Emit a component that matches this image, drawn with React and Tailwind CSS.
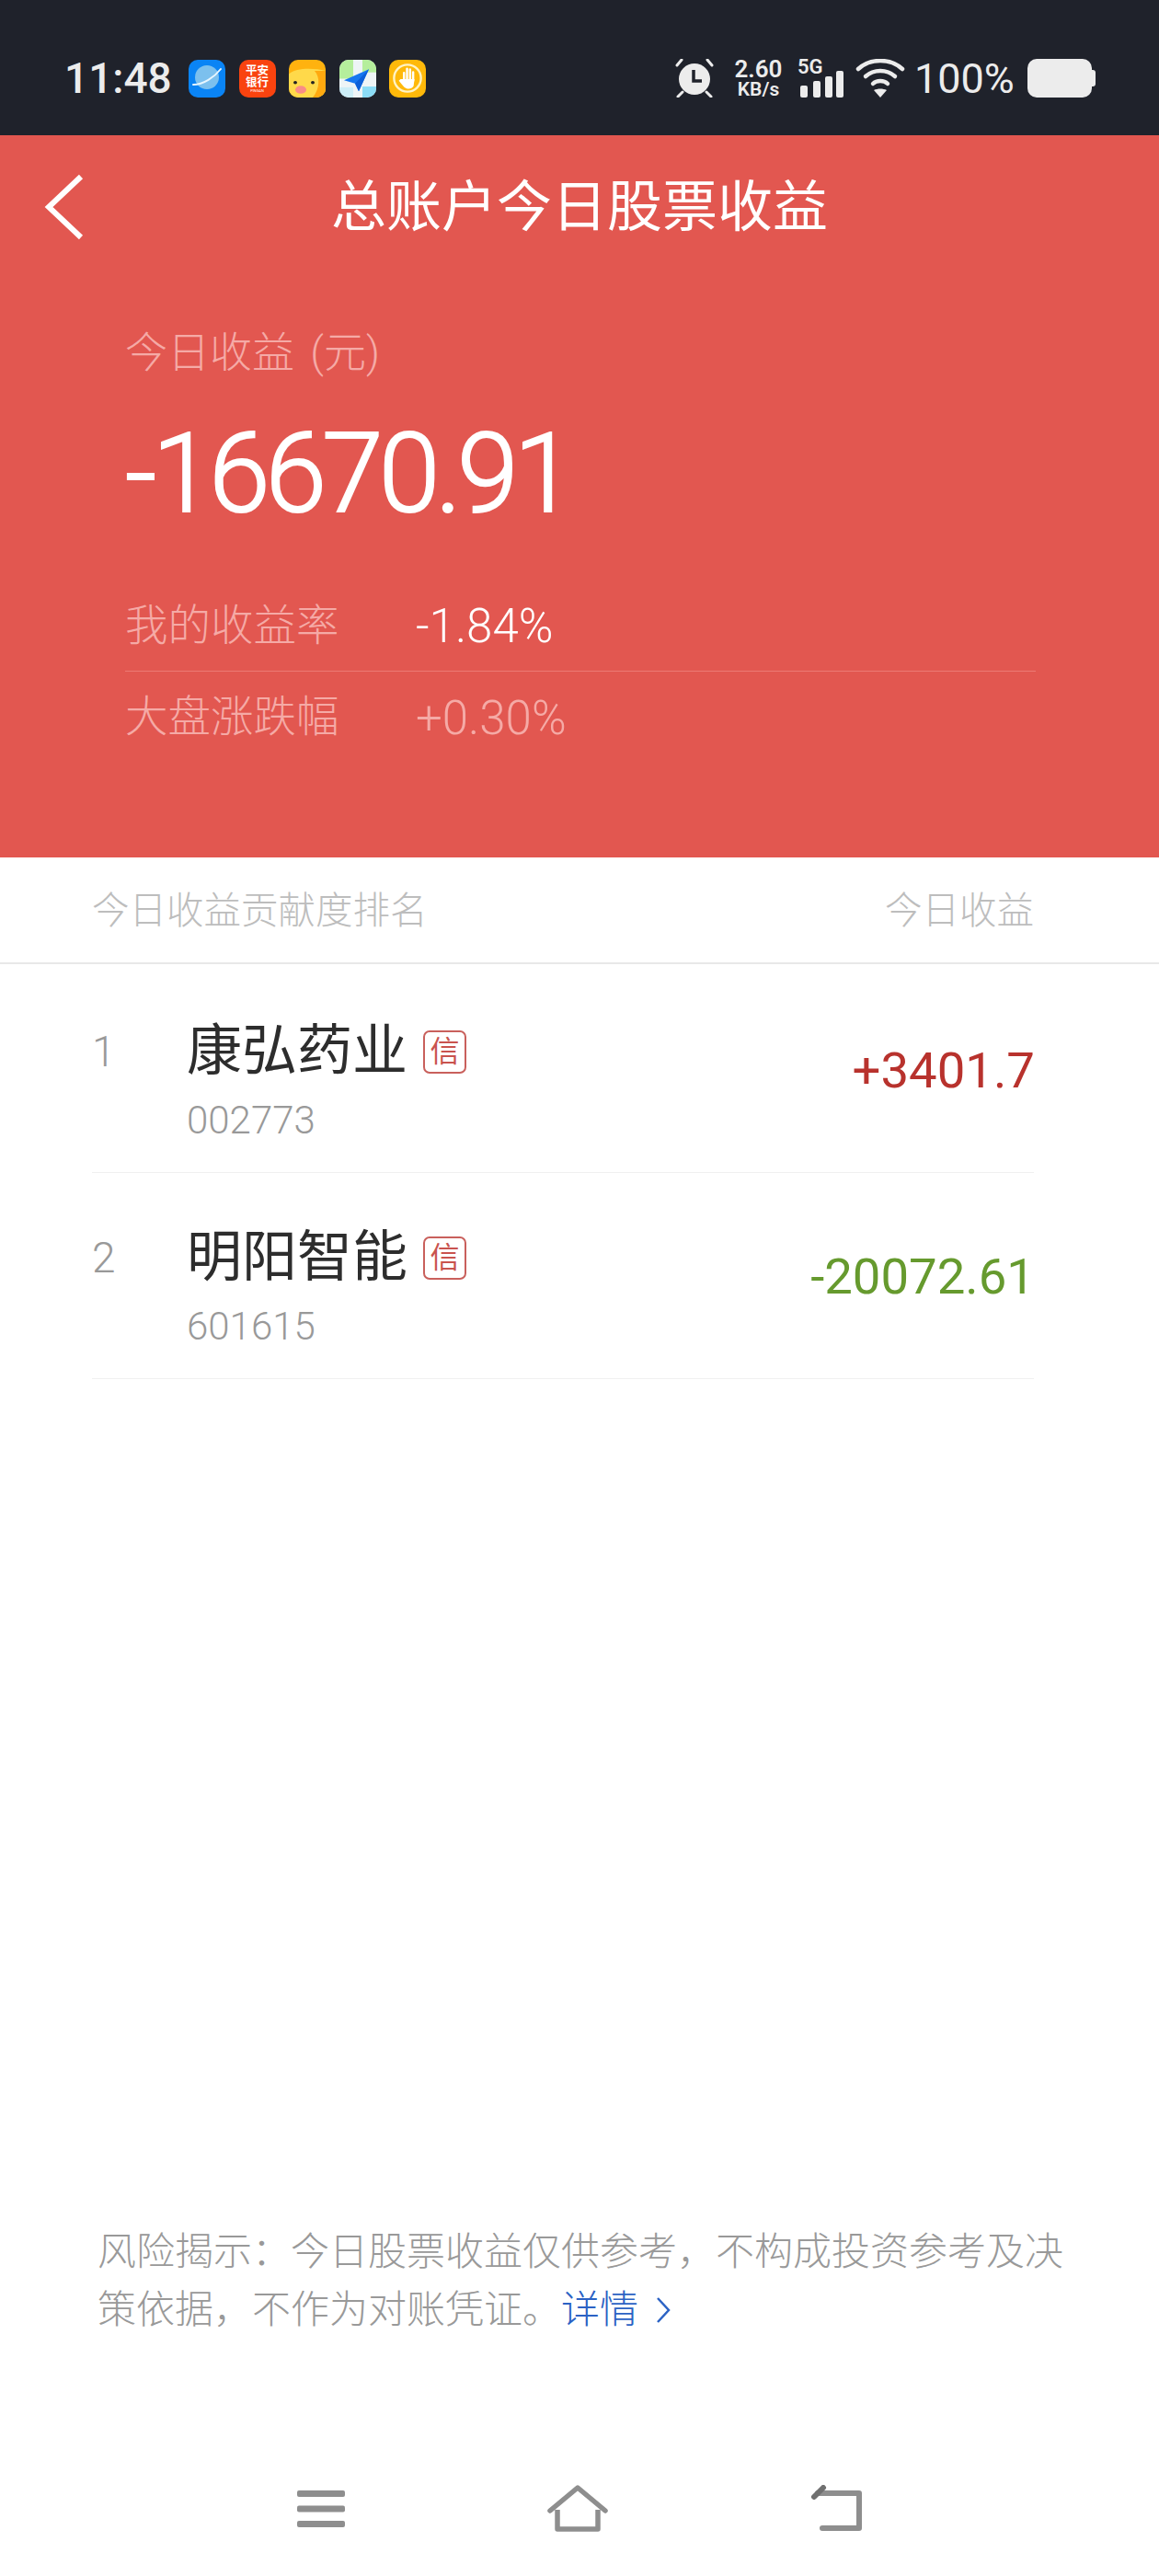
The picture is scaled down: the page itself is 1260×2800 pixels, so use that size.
import React from 'react';

const cjk = "font-['Roboto','Noto_Sans_CJK_SC',sans-serif]";

const stocks = [
  { rank: '1', name: '康弘药业', code: '002773', value: '+3401.7', color: 'text-[#b8322d]' },
  { rank: '2', name: '明阳智能', code: '601615', value: '-20072.61', color: 'text-[#669a2e]' },
];

const AppIcon = ({ className, children }) => (
  <div className={`w-[40px] h-[41px] rounded-[10px] overflow-hidden flex flex-col items-center justify-center ${className}`}>
    {children}
  </div>
);

const StatusBar = () => (
  <div className="h-[147px] bg-[#1f222b] flex items-center justify-between pl-[70px] pr-[69px] pt-[23px] text-[#ececec]">
    <div className="flex items-center">
      <span className="text-[46px] leading-none font-medium font-['Roboto',sans-serif] w-[135px]">11:48</span>
      <div className="flex gap-[14.5px]">
        <AppIcon className="bg-[#0a84f5]">
          <svg width="36" height="36" viewBox="0 0 36 36">
            <circle cx="18" cy="17" r="13" fill="#7cc0ee" />
            <path d="M3 25 C14 25 26 17 33 8" fill="none" stroke="#e8f6ff" strokeWidth="2" strokeLinecap="round" />
          </svg>
        </AppIcon>
        <AppIcon className="bg-[#f9430f] text-white font-bold leading-[13px] text-[12.5px]">
          <span>平安</span>
          <span>银行</span>
          <span className="text-[4px] leading-[5px] font-normal">PINGAN</span>
        </AppIcon>
        <AppIcon className="bg-[#ffb20f]">
          <svg width="40" height="41" viewBox="0 0 40 48" preserveAspectRatio="none">
            <path d="M0 18 C8 10 26 10 40 14 L40 48 L0 48 Z" fill="#ffd94a" />
            <path d="M28 14 C34 22 34 36 26 48 L40 48 L40 14 Z" fill="#ffa90f" />
            <circle cx="7" cy="29" r="2" fill="#222" />
            <circle cx="26" cy="29" r="2" fill="#222" />
            <ellipse cx="13" cy="38" rx="6" ry="5" fill="#f98d86" />
          </svg>
        </AppIcon>
        <AppIcon className="bg-[#eef4f6]">
          <svg width="40" height="41" viewBox="0 0 40 48" preserveAspectRatio="none">
            <rect x="0" y="0" width="15" height="24" fill="#b5ee9c" />
            <rect x="25" y="0" width="15" height="16" fill="#b5ee9c" />
            <rect x="0" y="35" width="15" height="13" fill="#cdeef8" />
            <rect x="25" y="34" width="15" height="14" fill="#8bdcf6" />
            <path d="M32 12 L5 26 L17 30 L21 40 Z" fill="#1677f0" />
            <path d="M32 12 L17 30 L21 40 Z" fill="#0c5fd8" />
          </svg>
        </AppIcon>
        <AppIcon className="bg-[#ffb90a]">
          <svg width="34" height="34" viewBox="0 0 36 36">
            <circle cx="18" cy="18" r="15.500" fill="none" stroke="#fff3c4" strokeWidth="2.500" />
            <path d="M14 21 V12 M17.500 20 V7 M21 20 V8 M24.500 21 V11" fill="none" stroke="#fff" strokeWidth="2.600" strokeLinecap="round" />
            <path d="M13 19 H26 L25 27 C23 31 17 31 14 28 L8 21 L10 19 Z" fill="#fff" />
          </svg>
        </AppIcon>
      </div>
    </div>
    <div className="flex items-center">
      <svg width="44" height="42" viewBox="0 0 44 42" fill="none" className="mr-[19px]">
        <circle cx="22" cy="22" r="17" fill="#ececec" />
        <path d="M21 12 V24 H30" stroke="#1f222b" strokeWidth="3.500" />
        <path d="M3 7 L8 1 M41 7 L36 1 M4 41 L9 36 M40 41 L35 36" stroke="#ececec" strokeWidth="3" strokeLinecap="round" />
      </svg>
      <div className="w-[57px] mr-[14px] flex flex-col items-center font-['Roboto',sans-serif] font-semibold">
        <span className="text-[26px] leading-[24px]">2.60</span>
        <span className="text-[21px] leading-[20px]">KB/s</span>
      </div>
      <div className="w-[50px] mr-[13px] h-[42px] relative">
        <span className="absolute left-0 top-[-3px] text-[22px] leading-[24px] font-semibold font-['Roboto',sans-serif]">5G</span>
        <svg width="50" height="42" viewBox="0 0 50 42" className="absolute left-0 top-0">
          <rect x="3" y="29" width="8" height="13" rx="2" fill="#ececec" />
          <rect x="17" y="24" width="8" height="18" rx="2" fill="#ececec" />
          <rect x="30" y="19" width="8" height="23" rx="2" fill="#ececec" />
          <rect x="42" y="13" width="8" height="29" rx="2" fill="#ececec" />
        </svg>
      </div>
      <svg width="54" height="42" viewBox="0 0 54 42" fill="none" className="mr-[10px]">
        <path d="M3 11 C16 -1 38 -1 51 11" stroke="#ececec" strokeWidth="4.500" strokeLinecap="round" />
        <path d="M11 19 C20 11 34 11 43 19" stroke="#ececec" strokeWidth="4.500" strokeLinecap="round" />
        <path d="M19 27 C23 23 31 23 35 27" stroke="#ececec" strokeWidth="4.500" strokeLinecap="round" />
        <path d="M20 34 C24 32 30 32 34 34 L27 42 Z" fill="#ececec" />
      </svg>
      <span className="w-[123px] text-[45px] leading-none font-['Roboto',sans-serif]">100%</span>
      <div className="flex items-center">
        <div className="w-[70px] h-[42px] rounded-[10px] bg-[#ececec]"></div>
        <div className="w-[4px] h-[18px] rounded-r-[3px] bg-[#ececec]"></div>
      </div>
    </div>
  </div>
);

const Summary = () => (
  <div className="h-[785px] bg-[#e25750] flex flex-col">
    <div className="h-[158px] relative flex items-center justify-center">
      <svg width="44" height="72" viewBox="0 0 44 72" fill="none" className="absolute left-[48px] top-[42px]">
        <path d="M40 3 L5 36 L40 69" stroke="#fff" strokeWidth="6" />
      </svg>
      <h1 className="text-[60px] leading-none text-white font-normal">总账户今日股票收益</h1>
    </div>
    <div className="pl-[136px] pr-[134px] pt-[48px]">
      <div className="text-[46px] leading-[60px] text-[#f5aaa6] font-light">
        今日收益 <span className="ml-[6px]">(元)</span>
      </div>
      <div className="mt-[32px] text-[120px] leading-[140px] text-white font-light tracking-[-5px] [-webkit-text-stroke:2px_white]">-16670.91</div>
      <div className="mt-[66px] h-[79px] border-b border-[#ec7a74] flex items-center pb-[19px]">
        <span className="w-[316px] text-[46.500px] text-[#f5aaa6] font-light">我的收益率</span>
        <span className="text-white text-[51px] leading-none font-light">-1.84%</span>
      </div>
      <div className="h-[100px] flex items-center">
        <span className="w-[316px] text-[46.500px] text-[#f5aaa6] font-light">大盘涨跌幅</span>
        <span className="text-[#f5aaa6] text-[51px] leading-none font-light">+0.30%</span>
      </div>
    </div>
  </div>
);

const StockRow = ({ stock }) => (
  <div className="h-[224px] ml-[100px] mr-[136px] pt-[62px] border-b border-[#f0f0f0] flex items-start justify-between">
    <div className="flex items-start">
      <span className="w-[103px] text-[#999] text-[46px] leading-[60px] font-light">{stock.rank}</span>
      <div>
        <div className="flex items-center h-[60px]">
          <span className="text-[#2d2d2d] text-[60px] leading-none">{stock.name}</span>
          <span className="ml-[17px] w-[47px] h-[47px] border-2 border-[#c9605c] rounded-[7px] text-[#c9534e] text-[32px] leading-none flex items-center justify-center">信</span>
        </div>
        <div className="mt-[17px] text-[#999] text-[42px] leading-[56px] font-light">{stock.code}</div>
      </div>
    </div>
    <span className={`mt-[23px] mr-[-1px] text-[54.500px] leading-none font-normal ${stock.color}`}>{stock.value}</span>
  </div>
);

const NavBar = () => (
  <div className="h-[148px] flex justify-center items-start pt-[49px] gap-[220px]">
    <svg width="52" height="40" viewBox="0 0 52 40" className="mt-[6px]">
      <rect x="0" y="0" width="52" height="7" rx="2" fill="#8e8e8e" />
      <rect x="0" y="16.500" width="52" height="7" rx="2" fill="#8e8e8e" />
      <rect x="0" y="33" width="52" height="7" rx="2" fill="#8e8e8e" />
    </svg>
    <svg width="66" height="51" viewBox="0 0 66 51" fill="none">
      <path d="M3 28 L33 3 L63 28" stroke="#8e8e8e" strokeWidth="5.500" strokeLinecap="round" strokeLinejoin="round" />
      <path d="M11 27 V48 H55 V27" stroke="#8e8e8e" strokeWidth="5.500" strokeLinejoin="round" />
    </svg>
    <svg width="56" height="51" viewBox="0 0 56 51" fill="none">
      <path d="M8 9 H53 V47 H13" stroke="#8e8e8e" strokeWidth="6" strokeLinecap="round" strokeLinejoin="round" />
      <path d="M14 3 L4 13" stroke="#707070" strokeWidth="6" strokeLinecap="round" />
    </svg>
  </div>
);

export default function App() {
  return (
    <div className={`w-[1260px] h-[2800px] bg-white flex flex-col ${cjk}`}>
      <StatusBar />
      <Summary />
      <div className="h-[116px] pl-[100px] pr-[136px] pt-[3px] border-b-2 border-[#e8e8e8] flex items-center justify-between text-[40.500px] text-[#bdbdbd] font-light">
        <span>今日收益贡献度排名</span>
        <span>今日收益</span>
      </div>
      <div className="pt-[3px]">
        {stocks.map((stock) => (
          <StockRow key={stock.code} stock={stock} />
        ))}
      </div>
      <div className="mt-auto pl-[106px] text-[42px] leading-[63px] text-[#999] font-light">
        <div>风险揭示：今日股票收益仅供参考，不构成投资参考及决</div>
        <div className="flex items-center">
          <span>策依据，不作为对账凭证。</span>
          <span className="text-[#2b62c4]">详情</span>
          <svg width="18" height="30" viewBox="0 0 18 30" fill="none" className="ml-[18px]">
            <path d="M3 2 L15 15 L3 28" stroke="#2b62c4" strokeWidth="2.500" />
          </svg>
        </div>
      </div>
      <div className="h-[110px]"></div>
      <NavBar />
    </div>
  );
}
